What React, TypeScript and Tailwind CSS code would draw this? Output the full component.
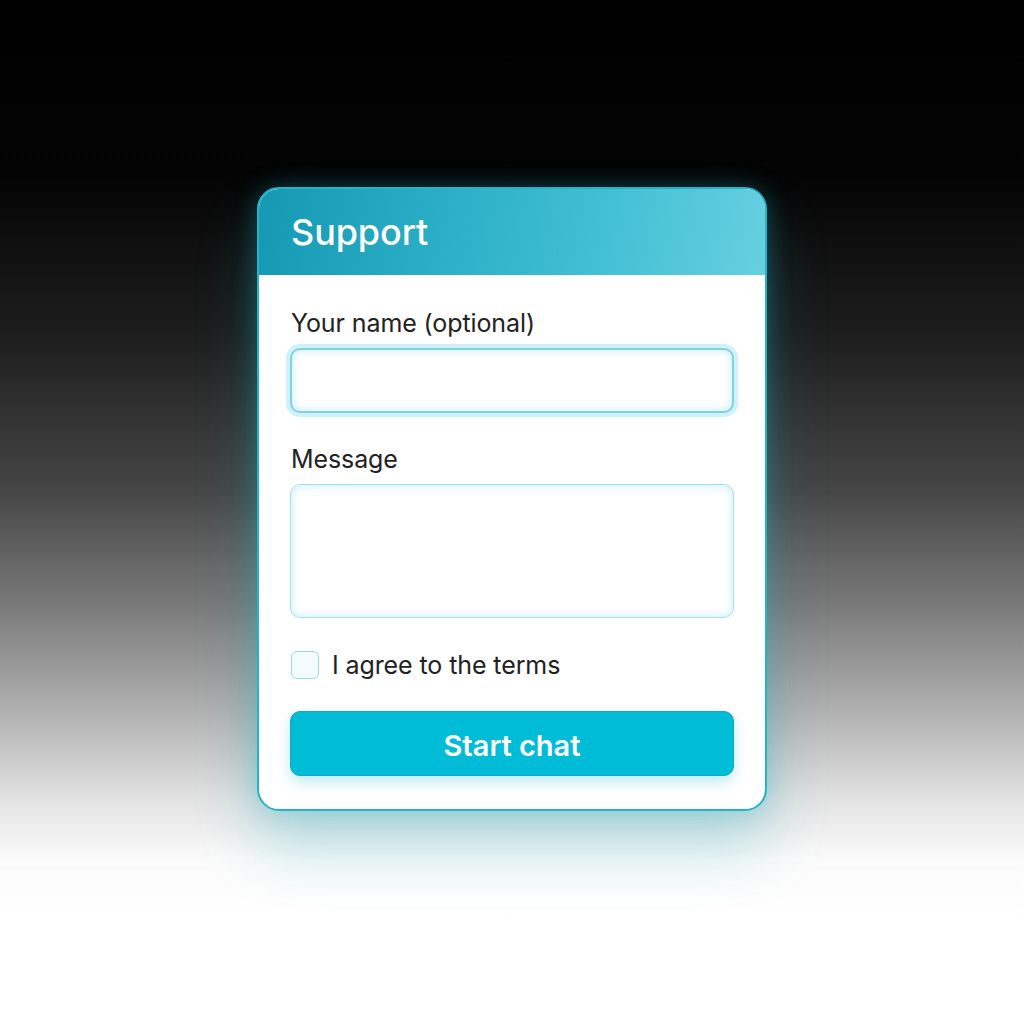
import React from "react";

export default function App() {
  return (
    <div
      className="w-[1024px] h-[1024px] flex justify-center pt-[187px] bg-[linear-gradient(to_bottom,#000_0%,#040404_17%,#1e1e1e_33%,#464646_48%,#7e7e7e_60%,#b4b4b4_70%,#e2e2e2_78%,#fbfbfb_84%,#fff_90%)]"
      style={{ fontFamily: "Inter, 'Noto Sans', sans-serif" }}
    >
      <div className="w-[510px] h-[624px] rounded-[22px] border-2 border-[#25b3c9] bg-white overflow-hidden flex flex-col shadow-[0_0_24px_rgba(40,190,215,0.3),0_36px_60px_rgba(30,160,180,0.28)]">
        <div className="h-[86px] shrink-0 flex items-center px-[32px] bg-[linear-gradient(100deg,#1598b2_0%,#2aaec6_35%,#40bed3_65%,#66d0e0_100%)]">
          <span className="text-[36px] font-medium text-white tracking-[-0.1px] leading-none -mt-[1px]">Support</span>
        </div>
        <div className="flex flex-col px-[31px] pt-[34px]">
          <label className="text-[25px] text-[#222] leading-[28px] pl-[1px] tracking-[-0.1px]">Your name (optional)</label>
          <div className="mt-[11px] h-[65px] rounded-[10px] border-2 border-[#7dd3e2] bg-white shadow-[0_0_0_4px_rgba(170,230,240,0.55),inset_0_0_8px_rgba(150,220,235,0.6)]" />
          <label className="mt-[32px] text-[25px] text-[#222] leading-[28px] pl-[1px] tracking-[-0.1px]">Message</label>
          <div className="mt-[11px] h-[134px] rounded-[10px] border border-[#a6dfe9] bg-white shadow-[inset_0_0_10px_rgba(160,222,236,0.6)]" />
          <div className="mt-[33px] flex items-center gap-[13px] pl-[1px]">
            <div className="w-[28px] h-[28px] rounded-[6px] border border-[#9fd8e2] bg-[#f3fbfc]" />
            <span className="text-[25px] text-[#222] leading-[28px] tracking-[-0.1px]">I agree to the terms</span>
          </div>
          <button className="mt-[32px] h-[65px] rounded-[10px] bg-[#00bcd6] border border-[#14a8c0] text-white text-[29px] font-semibold flex items-center justify-center pt-[4px] shadow-[0_6px_14px_rgba(0,170,200,0.25)]">
            Start chat
          </button>
        </div>
      </div>
    </div>
  );
}
